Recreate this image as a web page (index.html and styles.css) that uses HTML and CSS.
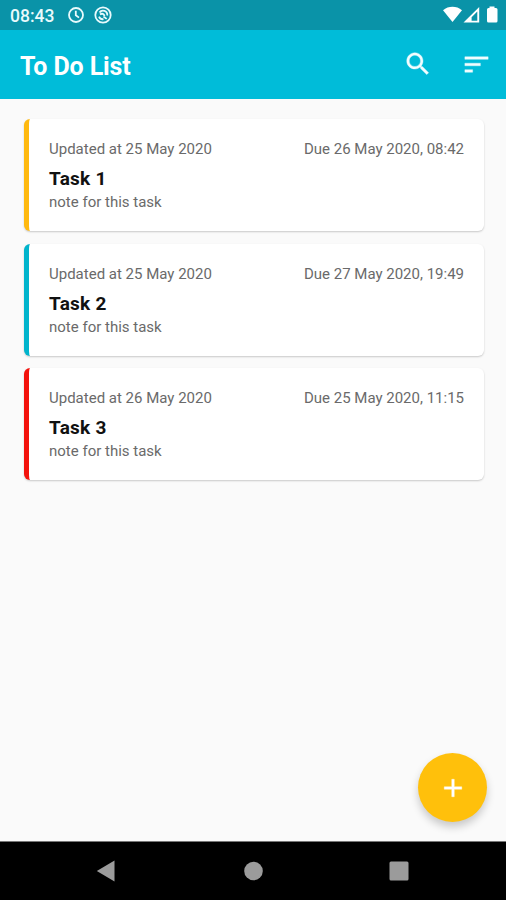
FILE: index.html
```html
<!DOCTYPE html>
<html lang="en">
<head>
<meta charset="utf-8">
<title>To Do List</title>
<link rel="stylesheet" href="styles.css">
</head>
<body>
<div class="screen">
  <div class="statusbar">
    <span class="clock">08:43</span>
    <svg class="alarm" width="16" height="16" viewBox="0 0 16 16"><circle cx="8" cy="8" r="7"/><path d="M7.800 3.800v4.400l3.200 2.400"/></svg>
    <svg class="sync" width="18" height="18" viewBox="0 0 18 18"><circle cx="9" cy="9" r="7.700"/><path d="M5.500 6.600A4.200 4.200 0 0 1 13.200 9.500M5 10.600A4.200 4.200 0 0 0 9.500 13.200M6 8.500c2-1.500 4-.5 4.500 1.500M9.500 10.500l3.200 2.400"/></svg>
    <svg class="signals" width="56" height="18" viewBox="0 0 56 18"><path d="M0 4.300C5.500-.3 13.500-.3 19 4.300L9.500 16z"/><path d="M36.200 1v15.500H20.500zM34.300 5.500l-5.700 5.700v3.600h5.700z" fill-rule="evenodd"/><path d="M46.500 2V.5h5V2h1.500q1.500 0 1.500 1.500v11.500q0 1.500-1.500 1.500h-7.500q-1.500 0-1.500-1.500V3.500Q44 2 45.500 2z"/></svg>
  </div>
  <header class="appbar">
    <h1>To Do List</h1>
    <svg class="search" width="30" height="30" viewBox="0 0 24 24"><path d="M15.500 14h-.79l-.28-.27C15.410 12.590 16 11.110 16 9.500 16 5.910 13.090 3 9.500 3S3 5.910 3 9.500 5.910 16 9.500 16c1.610 0 3.090-.59 4.230-1.570l.27.28v.79l5 4.990L20.490 19l-4.990-5zm-6 0C7.010 14 5 11.990 5 9.500S7.010 5 9.500 5 14 7.010 14 9.500 11.990 14 9.500 14z"/></svg>
    <svg class="sort" width="31" height="31" viewBox="0 0 24 24"><path d="M3 18h6v-2H3v2zM3 6v2h18V6H3zm0 7h12v-2H3v2z"/></svg>
  </header>
  <main class="tasks">
    <article class="card amber">
      <div class="meta"><span>Updated at 25 May 2020</span><span>Due 26 May 2020, 08:42</span></div>
      <h2>Task 1</h2>
      <p>note for this task</p>
    </article>
    <article class="card cyan">
      <div class="meta"><span>Updated at 25 May 2020</span><span>Due 27 May 2020, 19:49</span></div>
      <h2>Task 2</h2>
      <p>note for this task</p>
    </article>
    <article class="card red">
      <div class="meta"><span>Updated at 26 May 2020</span><span>Due 25 May 2020, 11:15</span></div>
      <h2>Task 3</h2>
      <p>note for this task</p>
    </article>
  </main>
  <button class="fab" aria-label="Add task"><svg width="30" height="30" viewBox="0 0 24 24"><path d="M19 13h-6v6h-2v-6H5v-2h6V5h2v6h6z"/></svg></button>
  <nav class="navbar">
    <svg width="20" height="22" viewBox="0 0 20 22"><path d="M.8 11 18.500.5v21z"/></svg>
    <svg width="20" height="20" viewBox="0 0 20 20"><circle cx="10.500" cy="10" r="9.300"/></svg>
    <svg width="20" height="20" viewBox="0 0 20 20"><rect x=".5" y=".5" width="19" height="19" rx="1.500"/></svg>
  </nav>
</div>
</body>
</html>
```
FILE: styles.css
```css
* { box-sizing: border-box; }
body { margin: 0; font-family: Roboto, sans-serif; background: #fafafa; }
h1, h2, p { margin: 0; }
svg { display: block; flex: none; }
.screen {
  position: relative;
  width: 506px;
  height: 900px;
  display: flex;
  flex-direction: column;
  overflow: hidden;
}
.statusbar {
  height: 30px;
  background: #0a93a8;
  display: flex;
  align-items: center;
  padding: 0 7px 0 10px;
  color: #e9fafc;
}
.clock { width: 58px; padding-top: 1px; font-size: 17.5px; font-weight: 500; line-height: 20px; }
.alarm, .sync { fill: none; stroke: #e9fafc; stroke-width: 1.8; }
.sync { margin-left: 10px; }
.signals { margin-left: auto; fill: #fff; }
.appbar {
  height: 69px;
  background: #00bcd9;
  display: flex;
  align-items: center;
  padding: 0 14px 0 20px;
  color: #fff;
}
.appbar h1 { margin-right: auto; margin-top: 4px; font-size: 25px; line-height: 30px; font-weight: 700; letter-spacing: -.1px; }
.appbar svg { fill: #f2fdff; stroke: #f2fdff; stroke-width: .3; margin-bottom: 1px; }
.appbar .search { margin-right: 28px; }
.tasks {
  flex: 1;
  padding: 20px 22px 0 24px;
  display: flex;
  flex-direction: column;
  gap: 12.5px;
}
.card {
  height: 112px;
  border-radius: 6px;
  background: #fff;
  border-left: 5px solid;
  padding: 20px 20px 0;
  box-shadow: 0 1px 2px rgba(0, 0, 0, .2);
}
.amber { border-color: #ffb90f; }
.cyan { border-color: #00b4cc; }
.red { border-color: #f3120c; }
.meta { display: flex; justify-content: space-between; }
.meta, .card p { font-size: 15px; line-height: 20px; color: #6a6a6a; }
.card h2 { font-size: 19px; line-height: 24px; margin: 8px 0 1px; font-weight: 700; color: #111; letter-spacing: .25px; }
.fab {
  position: absolute;
  left: 418px;
  top: 753px;
  width: 69px;
  height: 69px;
  border: 0;
  border-radius: 50%;
  background: #ffc00b;
  display: grid;
  place-items: center;
  padding: 0;
  box-shadow: 0 5px 9px rgba(0, 0, 0, .2);
}
.fab svg { fill: #fff; stroke: #fff; stroke-width: .3; }
.navbar {
  height: 59px;
  background: #000;
  border-top: 1px solid #777;
  display: flex;
  justify-content: space-between;
  align-items: center;
  padding: 0 97px 0 96px;
}
.navbar svg { fill: #9b9b9b; }
```
